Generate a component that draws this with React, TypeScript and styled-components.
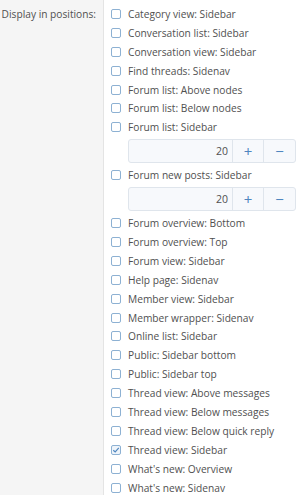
import React, { useState } from 'react'
import styled, { createGlobalStyle } from 'styled-components'

const GlobalStyle = createGlobalStyle`
  html, body {
    margin: 0;
    padding: 0;
    background: #fff;
  }
  body {
    font-family: 'Open Sans', 'Noto Sans', sans-serif;
    -webkit-font-smoothing: antialiased;
  }
`

const FormRow = styled.dl`
  display: grid;
  grid-template-columns: 104px 1fr;
  margin: 0;
  width: 300px;
  height: 495px;
  overflow: hidden;
`

const Label = styled.dt`
  background: #f5f5f5;
  border-right: 1px solid #e4e4e4;
  color: #505050;
  font-size: 10.2px;
  line-height: 19px;
  white-space: nowrap;
  text-align: right;
  padding: 4.5px 7px 0 0;
`

const Options = styled.dd`
  margin: 0;
  padding: 4.5px 4px 0 7px;
  display: flex;
  flex-direction: column;
`

const OptionRow = styled.label`
  display: flex;
  align-items: center;
  gap: 7px;
  height: 18.9px;
  flex: none;
  color: #505050;
  font-size: 10.2px;
  white-space: nowrap;
  cursor: pointer;
`

const Box = styled.span<{ $checked: boolean }>`
  flex: none;
  width: 10px;
  height: 10px;
  box-sizing: border-box;
  border: 1px solid #8db1d3;
  border-radius: 2px;
  background: ${({ $checked }) => ($checked ? '#eef4fa' : '#fff')};
  display: flex;
  align-items: center;
  justify-content: center;
`

const Spinbox = styled.div`
  flex: none;
  display: grid;
  grid-template-columns: 1fr 31px 32px;
  height: 24px;
  margin: 2px 0 3px 17px;
  box-sizing: border-box;
  border: 1px solid #dfe5ec;
  border-radius: 3px;
  background: #f7f9fc;
  overflow: hidden;
`

const SpinValue = styled.span`
  display: flex;
  align-items: center;
  justify-content: flex-end;
  padding-right: 4px;
  color: #505050;
  font-size: 10.5px;
`

const SpinButton = styled.button`
  border: 0;
  border-left: 1px solid #dfe5ec;
  background: transparent;
  color: #4f86bf;
  font-size: 15px;
  font-family: 'Open Sans', sans-serif;
  padding: 0;
  display: flex;
  align-items: center;
  justify-content: center;
  cursor: pointer;
`

type Option = { label: string; checked?: boolean; spin?: number }

const options: Option[] = [
  { label: 'Category view: Sidebar' },
  { label: 'Conversation list: Sidebar' },
  { label: 'Conversation view: Sidebar' },
  { label: 'Find threads: Sidenav' },
  { label: 'Forum list: Above nodes' },
  { label: 'Forum list: Below nodes' },
  { label: 'Forum list: Sidebar', spin: 20 },
  { label: 'Forum new posts: Sidebar', spin: 20 },
  { label: 'Forum overview: Bottom' },
  { label: 'Forum overview: Top' },
  { label: 'Forum view: Sidebar' },
  { label: 'Help page: Sidenav' },
  { label: 'Member view: Sidebar' },
  { label: 'Member wrapper: Sidenav' },
  { label: 'Online list: Sidebar' },
  { label: 'Public: Sidebar bottom' },
  { label: 'Public: Sidebar top' },
  { label: 'Thread view: Above messages' },
  { label: 'Thread view: Below messages' },
  { label: 'Thread view: Below quick reply' },
  { label: 'Thread view: Sidebar', checked: true },
  { label: "What's new: Overview" },
  { label: "What's new: Sidenav" },
]

function Check() {
  return (
    <svg width="8" height="8" viewBox="0 0 8 8">
      <path d="M1.3 4.2 L3.2 6 L6.8 1.9" fill="none" stroke="#4f86bf" strokeWidth="1.2" />
    </svg>
  )
}

export default function App() {
  const [state, setState] = useState(options)
  const toggle = (i: number) =>
    setState(s => s.map((o, j) => (j === i ? { ...o, checked: !o.checked } : o)))

  return (
    <>
      <GlobalStyle />
      <FormRow>
        <Label>Display in positions:</Label>
        <Options>
          {state.map((o, i) => (
            <React.Fragment key={o.label}>
              <OptionRow onClick={() => toggle(i)}>
                <Box $checked={!!o.checked}>{o.checked && <Check />}</Box>
                {o.label}
              </OptionRow>
              {o.spin !== undefined && (
                <Spinbox>
                  <SpinValue>{o.spin}</SpinValue>
                  <SpinButton>+</SpinButton>
                  <SpinButton>−</SpinButton>
                </Spinbox>
              )}
            </React.Fragment>
          ))}
        </Options>
      </FormRow>
    </>
  )
}
